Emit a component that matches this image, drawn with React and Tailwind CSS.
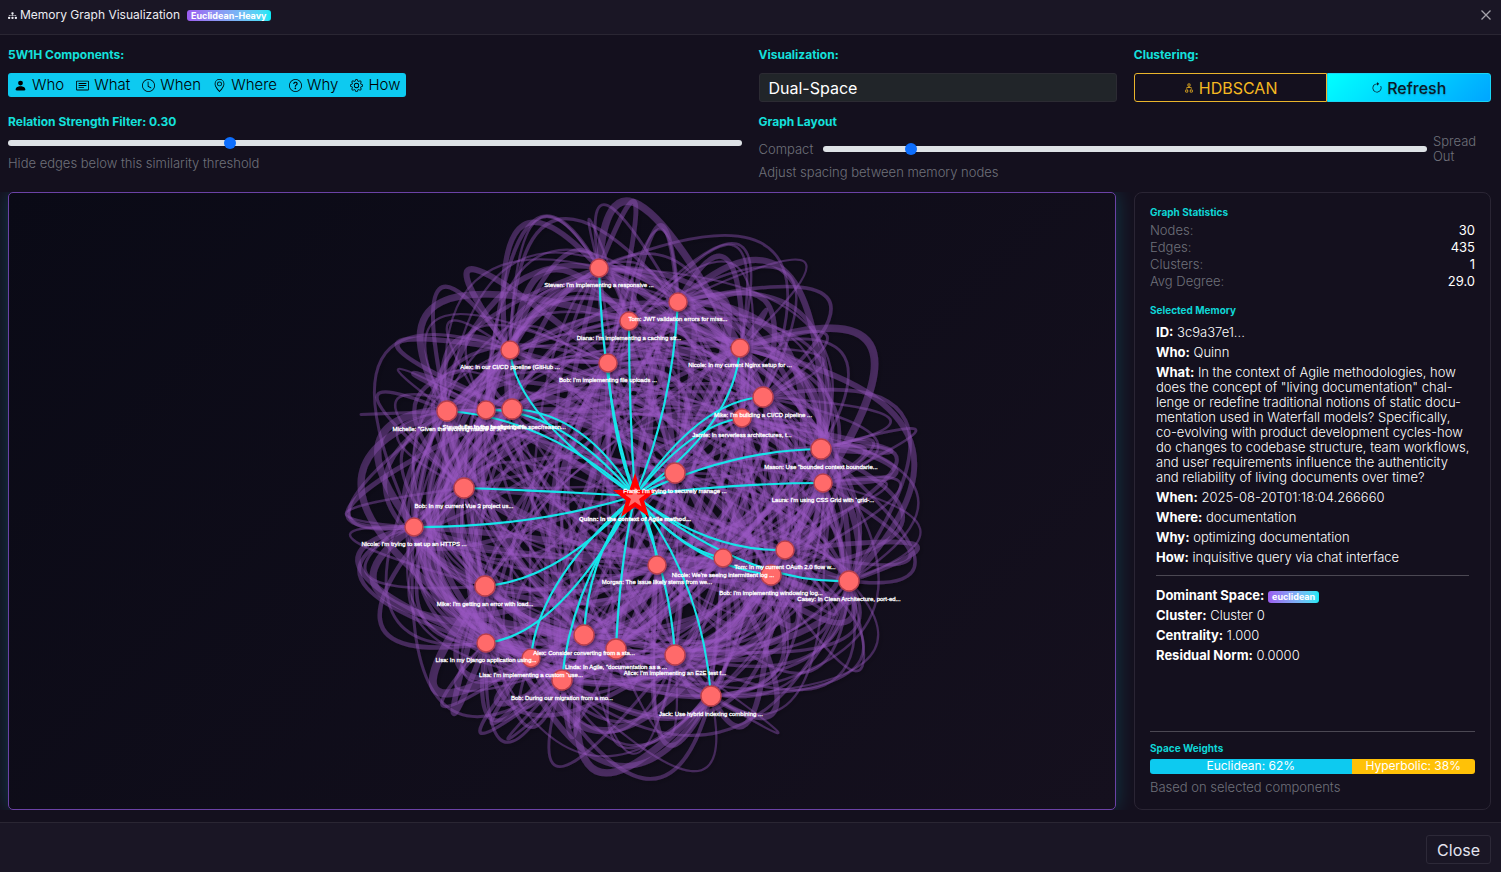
import React from "react";
import { BsDiagram3Fill, BsPersonFill, BsCardText, BsClock, BsGeoAlt, BsQuestionCircle, BsGear, BsDiagram2, BsArrowClockwise } from "react-icons/bs";

const CENTER = { x: 635, y: 491 };

const NODES = [
  { x: 599, y: 268, r: 9, label: "Steven: I'm implementing a responsive ...", cx: 603, cy: 400 },
  { x: 678, y: 302, r: 9, label: "Tom: JWT validation errors for miss...", cx: 672, cy: 410 },
  { x: 629, y: 321, r: 9, label: "Diana: I'm implementing a caching str...", cx: 629, cy: 410 },
  { x: 608, y: 363, r: 9, label: "Bob: I'm implementing file uploads ...", cx: 612, cy: 440 },
  { x: 510, y: 350, r: 9, label: "Alex: In our CI/CD pipeline (GitHub ...", cx: 515, cy: 415 },
  { x: 740, y: 348, r: 9, label: "Nicole: In my current Nginx setup for ...", cx: 735, cy: 425 },
  { x: 742, y: 418, r: 9, label: "Jamie: In serverless architectures, t...", cx: 690, cy: 425 },
  { x: 763, y: 397, r: 10, label: "Mike: I'm building a CI/CD pipeline ...", cx: 700, cy: 400 },
  { x: 447, y: 411, r: 10, label: "Michelle: \"Given the evolving nature of ...", cx: 545, cy: 417 },
  { x: 486, y: 410, r: 9, label: "Steven: I'm trying to align the fi...", cx: 560, cy: 408 },
  { x: 512, y: 409, r: 10, label: "Julia: In the beginning the spec/reason...", cx: 585, cy: 412 },
  { x: 821, y: 449, r: 10, label: "Mason: Use \"bounded context boundarie...", cx: 730, cy: 450 },
  { x: 823, y: 483, r: 9, label: "Laura: I'm using CSS Grid with `grid-...", cx: 735, cy: 483 },
  { x: 675, y: 473, r: 10, label: "Frank: I'm trying to securely manage ...", cx: 655, cy: 480 },
  { x: 464, y: 488, r: 10, label: "Bob: In my current Vue 3 project us...", cx: 550, cy: 491 },
  { x: 414, y: 527, r: 9, label: "Nicole: I'm trying to set up an HTTPS ...", cx: 530, cy: 528 },
  { x: 485, y: 586, r: 10, label: "Mike: I'm getting an error with load...", cx: 560, cy: 580 },
  { x: 486, y: 643, r: 9, label: "Lisa: In my Django application using...", cx: 560, cy: 635 },
  { x: 531, y: 658, r: 9, label: "Lisa: I'm implementing a custom `use...", cx: 538, cy: 580 },
  { x: 562, y: 680, r: 10, label: "Bob: During our migration from a mo...", cx: 570, cy: 590 },
  { x: 584, y: 635, r: 10, label: "Alex: Consider converting from a sta...", cx: 588, cy: 555 },
  { x: 616, y: 649, r: 10, label: "Linda: In Agile, \"documentation as a ...", cx: 620, cy: 560 },
  { x: 675, y: 655, r: 10, label: "Alice: I'm implementing an E2E test f...", cx: 670, cy: 575 },
  { x: 711, y: 696, r: 10, label: "Jack: Use hybrid indexing combining ...", cx: 702, cy: 580 },
  { x: 657, y: 565, r: 9, label: "Morgan: The issue likely stems from we...", cx: 655, cy: 530 },
  { x: 723, y: 558, r: 9, label: "Nicole: We're seeing intermittent log ...", cx: 680, cy: 550 },
  { x: 785, y: 550, r: 9, label: "Tom: In my current OAuth 2.0 flow w...", cx: 710, cy: 552 },
  { x: 771, y: 575, r: 10, label: "Bob: I'm implementing windowing log...", cx: 690, cy: 565 },
  { x: 849, y: 581, r: 10, label: "Casey: In Clean Architecture, port-ed...", cx: 750, cy: 585 },
];

function makeRandom(seed) {
  let s = seed;
  return () => {
    s = (s * 1664525 + 1013904223) % 4294967296;
    return s / 4294967296;
  };
}

function buildEdges() {
  const rand = makeRandom(42);
  const edges = [];
  for (let i = 0; i < NODES.length; i++) {
    for (let j = i + 1; j < NODES.length; j++) {
      const a = NODES[i];
      const b = NODES[j];
      const mx = (a.x + b.x) / 2 - CENTER.x;
      const my = (a.y + b.y) / 2 - CENTER.y;
      const dist = Math.hypot(mx, my);
      const angle = Math.atan2(my, mx) + (rand() - 0.5) * (dist < 80 ? 2.6 : 0.7);
      const wanted = dist * 1.6 + 30 + rand() * 130;
      const reach = Math.min(wanted, 2 * 288 - dist, 395);
      const cx = Math.round(CENTER.x + Math.cos(angle) * reach);
      const cy = Math.round(CENTER.y + Math.sin(angle) * reach);
      edges.push({ d: `M${a.x} ${a.y}Q${cx} ${cy} ${b.x} ${b.y}`, w: 2 + rand() * rand() * 6.5 });
    }
  }
  return edges;
}

const EDGES = buildEdges();

function MemoryGraph() {
  return (
    <svg viewBox="9 193 1106 616" className="block h-full w-full" role="img" aria-label="Memory graph">
      <defs>
        <filter id="soft" x="-20%" y="-20%" width="140%" height="140%">
          <feDropShadow dx="2" dy="2" stdDeviation="2" floodColor="#000" floodOpacity="0.5" />
        </filter>
      </defs>
      <g fill="none" stroke="#9b59c6" strokeOpacity="0.36" filter="url(#soft)">
        {EDGES.map((e, i) => <path key={i} d={e.d} strokeWidth={e.w} />)}
      </g>
      <g fill="none" stroke="#17e4ea" strokeWidth="2.2">
        {NODES.map((n, i) => <path key={i} d={`M${n.x} ${n.y}Q${n.cx} ${n.cy} 635 496`} />)}
      </g>
      <g fill="#ff6b6b" stroke="#b83f4c" strokeWidth="1.4" filter="url(#soft)">
        {NODES.map((n, i) => <circle key={i} cx={n.x} cy={n.y} r={n.r} />)}
      </g>
      <path d="M635 473L640.500 490H657L644 500.500L649 517L635 507L621 517L626 500.500L613 490H629.500Z" fill="#ff0000" />
      <path d="M635 487L637.500 494.500H645L639 499L641.500 506.500L635 502L628.500 506.500L631 499L625 494.500H632.500Z" fill="#ff6b6b" />
      <g fill="#fff" stroke="#fff" strokeWidth="0.3" fontSize="6" textAnchor="middle" className="font-['Liberation_Sans',Arial,sans-serif]">
        {NODES.map((n, i) => <text key={i} x={n.x} y={n.y + n.r + 10}>{n.label}</text>)}
        <text x="635" y="521" fontWeight="bold">Quinn: In the context of Agile method...</text>
      </g>
    </svg>
  );
}

const COMPONENTS = [
  ["Who", BsPersonFill], ["What", BsCardText], ["When", BsClock],
  ["Where", BsGeoAlt], ["Why", BsQuestionCircle], ["How", BsGear],
];

const STATS = [["Nodes:", "30"], ["Edges:", "435"], ["Clusters:", "1"], ["Avg Degree:", "29.0"]];

const WHAT = `In the context of Agile methodologies, how
does the concept of "living documentation" chal-
lenge or redefine traditional notions of static docu-
mentation used in Waterfall models? Specifically,
co-evolving with product development cycles-how
do changes to codebase structure, team workflows,
and user requirements influence the authenticity
and reliability of living documents over time?`;

const MEMORY = [
  ["ID:", "3c9a37e1..."],
  ["Who:", "Quinn"],
  ["What:", WHAT],
  ["When:", "2025-08-20T01:18:04.266660"],
  ["Where:", "documentation"],
  ["Why:", "optimizing documentation"],
  ["How:", "inquisitive query via chat interface"],
];

const SLIDER = "block h-4 w-full min-w-0 cursor-pointer appearance-none bg-transparent [&::-webkit-slider-runnable-track]:h-1.5 [&::-webkit-slider-runnable-track]:rounded-full [&::-webkit-slider-runnable-track]:bg-[#dee2e6] [&::-webkit-slider-thumb]:-mt-[3px] [&::-webkit-slider-thumb]:size-3 [&::-webkit-slider-thumb]:appearance-none [&::-webkit-slider-thumb]:rounded-full [&::-webkit-slider-thumb]:bg-[#0d6efd]";
const LABEL = "block text-xs leading-4 font-bold text-[#14e0dc]";
const HEADING = "text-[10px] leading-3 font-bold text-[#0fd6d6]";
const HINT = "text-[13px] leading-4 font-light text-[#6f707a]";
const BADGE = "rounded-[3px] bg-linear-to-r from-[#9b5cf0] to-[#06e9f5] px-1 text-[9px] font-bold text-white";
const DETAILS = "-mr-2 flex flex-col gap-[5px] pl-[6px] text-[13px] leading-[15px] font-light text-white";

function Row({ name, children }) {
  return <p className="whitespace-pre-line"><strong className="font-bold">{name}</strong> {children}</p>;
}

export default function App() {
  return (
    <div className="flex min-h-screen flex-col bg-[#14101e] font-['Inter','Liberation_Sans',sans-serif] text-[#ececf2]">
      <header className="flex h-[35px] items-center justify-between border-b border-[#2a2633] bg-[#1a1625] pr-[10px] pb-1 pl-2">
        <div className="flex items-center">
          <BsDiagram3Fill className="size-[9px]" />
          <h1 className="ml-[3px] text-xs leading-4">Memory Graph Visualization</h1>
          <span className={`ml-[7px] leading-[11px] ${BADGE}`}>Euclidean-Heavy</span>
        </div>
        <button type="button" aria-label="Close dialog" className="text-[#a5a3ab]">
          <svg viewBox="0 0 10 10" className="size-[10px]" fill="none" stroke="currentColor" strokeWidth="1.3"><path d="M0.5 0.5L9.5 9.5M9.5 0.5L0.5 9.5" /></svg>
        </button>
      </header>

      <main className="flex flex-1 flex-col px-2 pt-3 pb-3">
        <div className="grid h-[145px] grid-cols-[733fr_358fr_357fr] grid-rows-[67px_78px] gap-x-[17px] pr-[2px]">
          <div>
            <span className={LABEL}>5W1H Components:</span>
            <div className="mt-[10px] inline-flex h-6 items-center rounded-[3px] bg-[#0dcaf0] text-black">
              {COMPONENTS.map(([name, Icon]) => (
                <button key={name} type="button" className="flex items-center gap-[5px] px-[6px] text-[15px] leading-6 font-light">
                  <Icon className="size-[13px]" />{name}
                </button>
              ))}
            </div>
          </div>
          <div>
            <label htmlFor="view" className={LABEL}>Visualization:</label>
            <select id="view" className="mt-[10px] block h-[29px] w-full appearance-none rounded-[3px] border border-[#2c2b33] bg-[#212529] px-[9px] text-base leading-6 text-white">
              <option>Dual-Space</option>
            </select>
          </div>
          <div>
            <span className={LABEL}>Clustering:</span>
            <div className="mt-[10px] flex h-[29px] text-base leading-6">
              <button type="button" className="flex grow-[54] basis-0 items-center justify-center gap-1 rounded-l-[3px] border border-[#eab52c] text-[#f5b921]"><BsDiagram2 className="size-3" />HDBSCAN</button>
              <button type="button" className="flex grow-[46] basis-0 items-center justify-center gap-1 rounded-r-[3px] border border-[#19d5f5] bg-linear-135 from-[#00ffff] to-[#00a5ff] font-medium text-[#0a1a28] text-shadow-sm"><BsArrowClockwise className="size-3" />Refresh</button>
            </div>
          </div>
          <div>
            <label htmlFor="strength" className={LABEL}>Relation Strength Filter: 0.30</label>
            <input id="strength" type="range" min="0" max="1" step="0.01" defaultValue="0.3" className={`mt-[5px] mb-1 ${SLIDER}`} />
            <p className={HINT}>Hide edges below this similarity threshold</p>
          </div>
          <div className="col-span-2">
            <label htmlFor="spacing" className={LABEL}>Graph Layout</label>
            <div className="mt-1 flex h-[30px] items-center gap-[6px]">
              <span className={`w-[58px] ${HINT}`}>Compact</span>
              <div className="flex-1"><input id="spacing" type="range" min="0" max="100" defaultValue="14" className={SLIDER} /></div>
              <span className="w-[58px] text-[13px] leading-[15px] font-light text-[#6f707a]">Spread<br />Out</span>
            </div>
            <p className={HINT}>Adjust spacing between memory nodes</p>
          </div>
        </div>

        <div className="-mx-2 grid flex-1 grid-cols-[1108fr_357fr] gap-[18px] overflow-clip pr-[10px] pl-2">
          <section className="overflow-hidden rounded-[5px] border border-[#6b42a6] bg-linear-135 from-[#0a0a16] to-[#15101e] shadow-[0_0_20px_#00e5ff33]">
            <MemoryGraph />
          </section>

          <aside className="flex flex-col rounded-lg border border-[#2a2534] bg-[#14101e] px-[15px] pt-[13px] pb-[14px]">
            <h2 className={HEADING}>Graph Statistics</h2>
            <dl className="mt-1 text-[13px] leading-[17px]">
              {STATS.map(([k, v]) => (
                <div key={k} className="flex justify-between"><dt className="font-light text-[#6f707a]">{k}</dt><dd className="text-white">{v}</dd></div>
              ))}
            </dl>
            <h2 className={`mt-[14px] ${HEADING}`}>Selected Memory</h2>
            <div className={`mt-[9px] ${DETAILS}`}>
              {MEMORY.map(([k, v]) => <Row key={k} name={k}>{v}</Row>)}
            </div>
            <hr className="mx-[6px] mt-[10px] border-[#4b4853]" />
            <div className={`mt-3 ${DETAILS}`}>
              <Row name="Dominant Space:"><span className={`inline-block leading-3 ${BADGE}`}>euclidean</span></Row>
              <Row name="Cluster:">Cluster 0</Row>
              <Row name="Centrality:">1.000</Row>
              <Row name="Residual Norm:">0.0000</Row>
            </div>
            <div className="mt-auto border-t border-[#4b4853] pt-[10px]">
              <h2 className={HEADING}>Space Weights</h2>
              <div className="mt-[5px] flex h-[15px] overflow-hidden rounded-[3px] text-center text-xs leading-[14px] text-white">
                <div className="w-[62%] bg-[#0dcaf0]">Euclidean: 62%</div>
                <div className="w-[38%] bg-[#ffc107]">Hyperbolic: 38%</div>
              </div>
              <p className={`mt-[5px] ${HINT}`}>Based on selected components</p>
            </div>
          </aside>
        </div>
      </main>

      <footer className="flex h-[50px] items-center justify-end border-t border-[#2a2633] bg-[#1a1625] px-[10px] pt-1">
        <button type="button" className="h-[29px] rounded-[3px] border border-[#2d2938] px-[10px] text-base leading-6 text-[#e4e4f0]">Close</button>
      </footer>
    </div>
  );
}
